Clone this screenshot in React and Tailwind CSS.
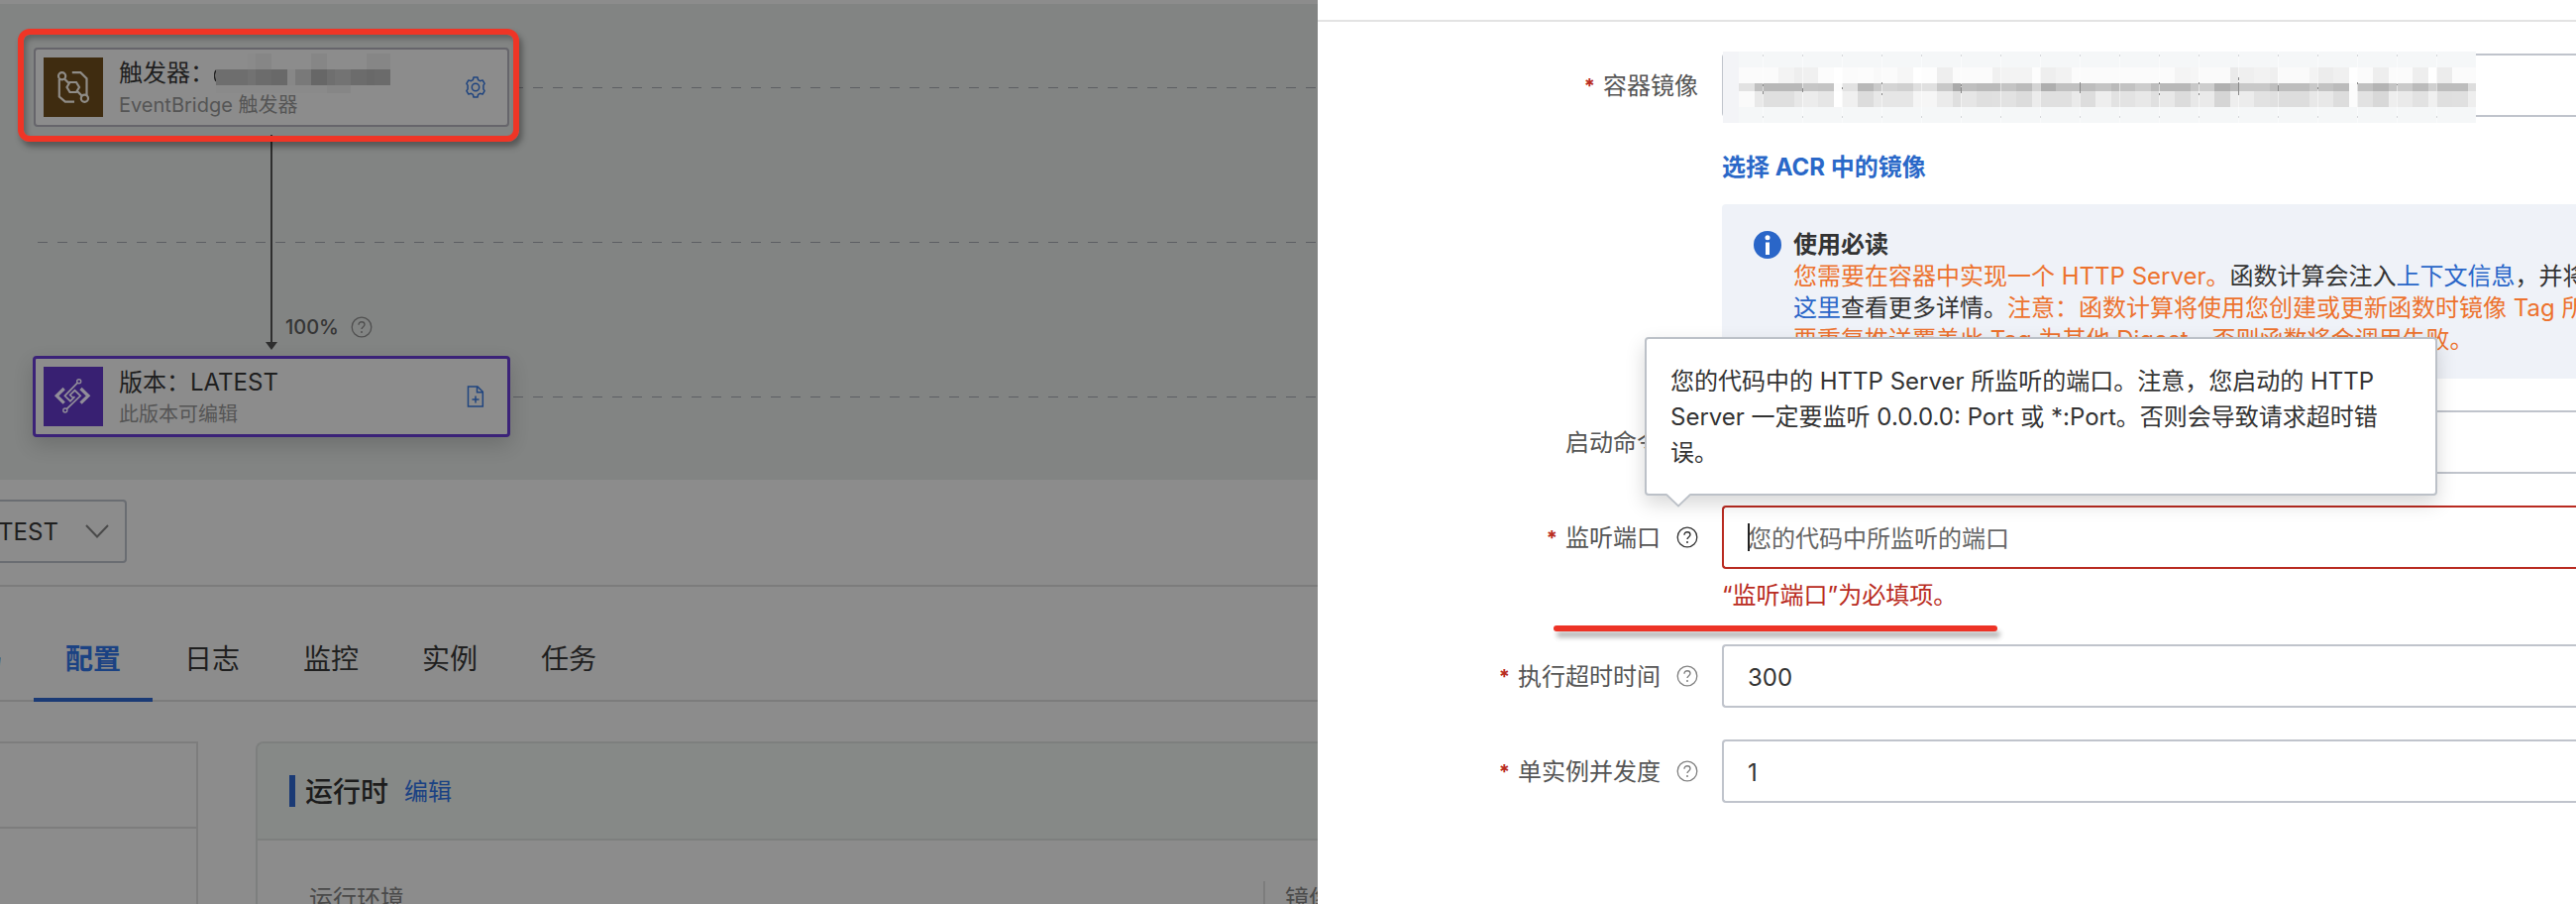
import React from "react";

const imageMosaic = {
  top: "f3fbfb fbf3ee f0fcff fbfcf9 fbf6ff fdeefb fbfbf0 f3f3fd eef2fb fbfbfb fbfbfb fbf4f6 fafaea eff2ef fafaf3 ecf0ff fbeefb fbeeff ecfbfb",
  mid: "f3e2c0 b8b8b8 c6c4fc e2b8ca d4d0df e0c8aa bfbaba c4bbd4 aec0c0 bdc4ba c2ccbc b8b8c8 cdb0bb c8c8be bdbdc8 c2bbfc c0b4c4 cabbd0 bdbddd",
  low: "f3fae9 dfdfe8 ece6ff f0dce8 e6e6f5 f6ebdf e6dfe0 e2dcec e0e0ea ddeee2 e3e8e0 e8dce8 ead5ee ece2e0 dddde8 e8ddfc e2d8ee eae2f0 dfe0ee",
};
const bands = [
  { key: "top", y: 16, h: 16 },
  { key: "mid", y: 32, h: 8 },
  { key: "low", y: 40, h: 16 },
];
const cells = [
  { dx: 0, w: 16 },
  { dx: 16, w: 16 },
  { dx: 32, w: 8 },
];

function ImageMosaic() {
  return (
    <svg className="absolute -top-0.5 left-px h-[72px] w-[760px]" viewBox="0 0 760 72" shapeRendering="crispEdges" aria-hidden="true">
      <rect width="760" height="72" fill="#f5f7f8" />
      {bands.map((band) =>
        imageMosaic[band.key].split(" ").map((tile, t) =>
          cells.map((cell, c) => {
            const g = tile.slice(c * 2, c * 2 + 2);
            return <rect key={band.key + t + "-" + c} x={t * 40 + cell.dx} y={band.y} width={cell.w} height={band.h} fill={"#" + g + g + g} />;
          })
        )
      )}
      <rect width="16" height="72" fill="#f3f4f7" />
      {Array.from({ length: 18 }, (_, i) => (
        <g key={i}>
          <rect x={(i + 1) * 40} y="0" width="1" height="72" fill="#ffffff" opacity="0.5" />
          <rect x={(i + 1) * 40} y="3" width="1" height="2" fill="#d5d7da" />
          <rect x={(i + 1) * 40} y="65" width="1" height="2" fill="#d5d7da" />
        </g>
      ))}
      <path d="M40 33v2M40 40v3M80 37v4M120 36v2M160 31v2M160 42v2M240 33v2M240 36v6M360 31v11M440 31v2M440 42v2M480 31v2M480 42v2M520 26v3M520 31v13M560 34v6M600 36v2M640 31v2M680 33v1" stroke="#8a8a8a" strokeWidth="1" />
    </svg>
  );
}

function NameMosaic() {
  return (
    <svg className="h-10 w-[178px]" viewBox="0 0 178 40" shapeRendering="crispEdges" aria-hidden="true">
      <path d="M2 17q-3 5 0 11" stroke="#222" strokeWidth="1.5" fill="none" shapeRendering="auto" />
      <g fill="#8a8a8a">
        <rect x="34" y="0" width="8" height="16" />
        <rect x="2" y="32" width="128" height="8" />
      </g>
      <g fill="#868686">
        <rect x="42" y="0" width="16" height="16" />
        <rect x="98" y="0" width="16" height="16" />
        <rect x="154" y="0" width="24" height="16" />
        <rect x="114" y="32" width="24" height="8" />
      </g>
      <rect x="2" y="16" width="32" height="16" fill="#6e6e6e" />
      <rect x="34" y="16" width="8" height="16" fill="#727272" />
      <rect x="42" y="16" width="16" height="16" fill="#6c6c6c" />
      <rect x="58" y="16" width="16" height="16" fill="#696969" />
      <rect x="74" y="16" width="8" height="16" fill="#878787" />
      <rect x="82" y="16" width="16" height="16" fill="#797979" />
      <rect x="98" y="16" width="16" height="16" fill="#676767" />
      <rect x="114" y="16" width="8" height="16" fill="#6f6f6f" />
      <rect x="122" y="16" width="16" height="16" fill="#737373" />
      <rect x="138" y="16" width="16" height="16" fill="#6c6c6c" />
      <rect x="154" y="16" width="8" height="16" fill="#696969" />
      <rect x="162" y="16" width="16" height="16" fill="#6b6b6b" />
    </svg>
  );
}

function HelpIcon({ className }) {
  return (
    <svg className={"h-[22px] w-[22px] shrink-0 " + className} viewBox="0 0 22 22" fill="none" stroke="currentColor" aria-hidden="true">
      <circle cx="11" cy="11" r="9.8" strokeWidth="1.3" />
      <path d="M8 8.7C8 6.9 9.3 5.8 11 5.8s3 1.1 3 2.7c0 2.1-3 2.3-3 4.6" strokeWidth="1.4" />
      <circle cx="11" cy="15.9" r="1" fill="currentColor" stroke="none" />
    </svg>
  );
}

function GearIcon() {
  return (
    <svg className="h-[22px] w-[22px]" viewBox="0 0 22 22" fill="none" stroke="#1f447f" strokeWidth="1.5" strokeLinejoin="round" aria-hidden="true">
      <path d="M9 1h4l.6 2.6 1.9 1.1 2.6-.8 2 3.5-1.2 1.7v3.8l1.2 1.7-2 3.5-2.6-.8-1.9 1.1L13 21H9l-.6-2.6-1.9-1.1-2.6.8-2-3.5 1.2-1.7V9.1L1.900 7.400l2-3.500 2.600.8 1.900-1.100z" />
      <circle cx="11" cy="11" r="3.700" />
    </svg>
  );
}

function FileAddIcon() {
  return (
    <svg className="h-[22px] w-[22px]" viewBox="0 0 22 22" fill="none" stroke="#1f447f" strokeWidth="1.5" aria-hidden="true">
      <path d="M3.500 1H13l5.300 5.300V21H3.500zM12.500 1v5.800h5.800M11 10.500v7M7.500 14h7" />
    </svg>
  );
}

function TriggerLogo() {
  return (
    <svg className="h-[60px] w-[60px] shrink-0 bg-[#3f2c10]" viewBox="0 0 60 60" fill="none" stroke="#8f8c87" strokeWidth="2.200" aria-hidden="true">
      <circle cx="18.600" cy="18.700" r="3.600" />
      <circle cx="41.400" cy="41.300" r="3.600" />
      <path d="M26.500 25h6.500l3 5-3 5h-6.500l-3-5zM21 21.500l4.500 4.500M34 34l4.600 4.600" />
      <path d="M15.800 22v17.500l6 5.200h9.200M28.800 15.200h8.500l6.200 6V38" />
    </svg>
  );
}

function FunctionLogo() {
  return (
    <svg className="h-[60px] w-[60px] shrink-0 bg-[#382072]" viewBox="0 0 60 60" fill="none" stroke="#918d99" aria-hidden="true">
      <path d="M20.700 22l-7.500 7.300 7.500 7.400M37.500 22l7.500 7.300-7.500 7.400" strokeWidth="3.200" />
      <circle cx="35.700" cy="14.700" r="2" strokeWidth="1.400" />
      <circle cx="21.800" cy="44" r="2" strokeWidth="1.400" />
      <path d="M34.300 16.200L21.400 29.300l5.600 5.400 4.500-4.600M23.300 42.600l13.900-13.300-5.700-5.500-4.800 4.700 2.800 2.700" strokeWidth="1.700" />
    </svg>
  );
}

function Tab({ children, active }) {
  return (
    <button
      type="button"
      className={
        "-mb-0.5 w-[120px] shrink-0 border-b-4 pt-[57px] pb-[23px] text-[28px] leading-8 " +
        (active ? "border-[#1a3a75] font-bold text-[#1b4283]" : "border-transparent text-[#1f1f1f]")
      }
    >
      {children}
    </button>
  );
}

function FieldLabel({ htmlFor, required, help, helpDark, children }) {
  return (
    <div className="flex h-16 w-96 shrink-0 items-center justify-end">
      <label htmlFor={htmlFor} className="flex items-center gap-2 pt-0.5 text-2xl leading-9 text-[#555555]">
        {required && <span className="text-xl leading-9 font-bold text-[#b92b21]">*</span>}
        {children}
      </label>
      {help && <HelpIcon className={"ml-4 " + (helpDark ? "text-[#333333]" : "text-[#808080]")} />}
    </div>
  );
}

const inputClass = "block h-16 w-full rounded-l-sm border-2 border-r-0 bg-white pt-0.5 pl-6 text-2xl text-[#333333] outline-none placeholder:text-[#666666] ";

function Workspace() {
  return (
    <main className="min-w-0 flex-1 overflow-hidden bg-[#8c8c8c] pt-1">
      <section className="relative h-[480px] bg-[#828483]">
        <svg className="absolute inset-0 h-full w-full" aria-hidden="true">
          <g stroke="#5c5e63" strokeWidth="1" strokeDasharray="10 10">
            <line x1="518" x2="100%" y1="84.5" y2="84.5" />
            <line x1="38" x2="100%" y1="240.5" y2="240.5" />
            <line x1="518" x2="100%" y1="396.5" y2="396.5" />
          </g>
          <line x1="274" x2="274" y1="132" y2="343" stroke="#2e2e2e" strokeWidth="2" />
          <path d="M268 341h12l-6 8z" fill="#2e2e2e" />
        </svg>
        <div className="absolute top-11 left-[34px] flex h-20 w-[480px] items-center rounded border-2 border-[#66656b] bg-[#8c8c8c] pr-[21px] pl-2">
          <TriggerLogo />
          <div className="ml-4 flex-1">
            <div className="flex h-9 items-center text-2xl leading-9 text-[#1f1f1f]">
              触发器：
              <NameMosaic />
            </div>
            <div className="text-xl leading-7 text-[#555555]">EventBridge 触发器</div>
          </div>
          <button type="button" aria-label="设置">
            <GearIcon />
          </button>
        </div>
        <div className="absolute top-[25px] left-[18px] h-[114px] w-[506px] rounded-xl border-6 border-[#ef3526] shadow-[3px_5px_6px_rgba(0,0,0,0.35),inset_3px_4px_5px_rgba(0,0,0,0.25)]" />
        <div className="absolute top-[312px] left-72 flex items-center gap-3 text-xl leading-7 font-medium text-[#353535]">
          100%
          <HelpIcon className="text-[#505050]" />
        </div>
        <div className="absolute top-[355px] left-[33px] flex h-[82px] w-[482px] items-center rounded border-3 border-[#3b2278] bg-[#8c8c8c] pr-[21px] pl-2 shadow-[0_8px_20px_rgba(0,0,0,0.16)]">
          <FunctionLogo />
          <div className="ml-4 flex-1">
            <div className="text-2xl leading-9 text-[#1f1f1f]">版本：LATEST</div>
            <div className="text-xl leading-7 text-[#555555]">此版本可编辑</div>
          </div>
          <button type="button" aria-label="发布版本">
            <FileAddIcon />
          </button>
        </div>
      </section>

      <div className="border-b-2 border-[#7c7c7c] pt-5 pb-[22px]">
        <div className="relative -ml-14 w-[184px]">
          <select aria-label="版本" className="block h-16 w-full appearance-none rounded border-2 border-[#6a6d72] bg-transparent pt-0.5 pl-6 text-2xl text-[#1f1f1f]">
            <option>LATEST</option>
          </select>
          <svg className="pointer-events-none absolute top-[25px] right-[18px] h-[14px] w-6" viewBox="0 0 24 14" fill="none" stroke="#4a4a4a" strokeWidth="2" aria-hidden="true">
            <path d="M1 1l11 11.500L23 1" />
          </svg>
        </div>
      </div>

      <nav className="-ml-[86px] flex border-b-2 border-[#7c7c7c]">
        <Tab>代码</Tab>
        <Tab active>配置</Tab>
        <Tab>日志</Tab>
        <Tab>监控</Tab>
        <Tab>实例</Tab>
        <Tab>任务</Tab>
      </nav>

      <div className="mt-10 flex h-96 gap-[58px]">
        <aside className="w-[200px] shrink-0 border-t-2 border-r-2 border-[#7d7d7d]">
          <div className="h-[86px] border-b-2 border-[#7d7d7d]" />
        </aside>
        <section className="min-w-0 flex-1 rounded-tl-lg border-t-2 border-l-2 border-[#7d7f7e]">
          <header className="flex h-[98px] items-center rounded-tl-md border-b-2 border-[#7d7f7e] bg-[#868987] pl-8">
            <span className="h-8 w-1.5 bg-[#1a3a75]" />
            <h2 className="ml-2.5 pt-0.5 text-[28px] leading-9 font-medium text-[#1c1c1c]">运行时</h2>
            <a href="#edit" className="ml-4 pt-0.5 text-2xl leading-9 text-[#1b4283]">
              编辑
            </a>
          </header>
          <div className="flex pt-[41px] pl-[52px] text-2xl leading-9 text-[#4a4a4a]">
            <div className="flex-1">运行环境</div>
            <div className="w-[55px] shrink-0 overflow-hidden border-l-2 border-[#7d7d7d] pl-5 whitespace-nowrap">镜像</div>
          </div>
        </section>
      </div>
    </main>
  );
}

function Drawer() {
  return (
    <aside className="w-[1270px] shrink-0 overflow-hidden bg-white">
      <div className="h-[22px] border-b-2 border-[#e3e3e3]" />
      <form className="flex flex-col gap-8 pt-8">
        <div className="flex gap-6">
          <FieldLabel htmlFor="image" required>
            容器镜像
          </FieldLabel>
          <div className="min-w-0 flex-1">
            <div className="relative">
              <input id="image" className={inputClass + "border-[#c0c4cc]"} />
              <ImageMosaic />
            </div>
            <a href="#acr" className="mt-[33px] inline-block text-2xl leading-9 font-bold text-[#2a68c8]">
              选择 ACR 中的镜像
            </a>
            <div className="mt-[19px] flex gap-3 overflow-hidden rounded-l-sm bg-[#eff2f8] pt-[25px] pb-[23px] pl-8 text-2xl leading-8 whitespace-nowrap text-[#333333]">
              <svg className="mt-0.5 h-7 w-7 shrink-0" viewBox="0 0 28 28" aria-hidden="true">
                <circle cx="14" cy="14" r="14" fill="#2a66c8" />
                <circle cx="14" cy="6.700" r="2.500" fill="#fff" />
                <rect x="12" y="11.500" width="4" height="12.500" fill="#fff" />
              </svg>
              <div>
                <div className="font-bold">使用必读</div>
                <div>
                  <span className="text-[#ed722e]">您需要在容器中实现一个 HTTP Server。</span>
                  函数计算会注入
                  <a href="#context" className="text-[#2a66c8]">
                    上下文信息
                  </a>
                  ，并将
                </div>
                <div>
                  <a href="#more" className="text-[#2a66c8]">
                    这里
                  </a>
                  查看更多详情。
                  <span className="text-[#ed722e]">注意：函数计算将使用您创建或更新函数时镜像 Tag 所</span>
                </div>
                <div className="text-[#ed722e]">要重复推送覆盖此 Tag 为其他 Digest，否则函数将会调用失败。</div>
              </div>
            </div>
          </div>
        </div>

        <div className="flex gap-6">
          <FieldLabel htmlFor="command" help>
            启动命令
          </FieldLabel>
          <div className="min-w-0 flex-1">
            <input id="command" className={inputClass + "border-[#c0c4cc]"} />
          </div>
        </div>

        <div className="relative flex gap-6">
          <FieldLabel htmlFor="port" required help helpDark>
            监听端口
          </FieldLabel>
          <div className="min-w-0 flex-1">
            <div className="relative">
              <input id="port" placeholder="您的代码中所监听的端口" className={inputClass + "border-[#b92b21]"} />
              <span className="absolute top-[18px] left-[26px] h-7 w-0.5 bg-[#222222]" />
            </div>
            <p className="mt-[9px] -mb-px text-2xl leading-9 text-[#b92b21]">“监听端口”为必填项。</p>
          </div>
          <div className="absolute top-[121px] left-[238px] h-1.5 w-[448px] rounded-full bg-[#ed3326] shadow-[3px_6px_5px_rgba(0,0,0,0.3)]" />
          <div
            role="tooltip"
            className="absolute bottom-[118px] left-[330px] h-40 w-[800px] rounded border-2 border-[#bcc1c8] bg-white px-6 pt-[25px] text-2xl leading-9 text-[#333333] shadow-[0_8px_20px_rgba(0,0,0,0.16)]"
          >
            您的代码中的 HTTP Server 所监听的端口。注意，您启动的 HTTP Server 一定要监听 0.0.0.0: Port 或 *:Port。否则会导致请求超时错误。
            <svg className="absolute top-full left-5 h-[14px] w-6" viewBox="0 0 24 14" aria-hidden="true">
              <path d="M0 0h24L12 12.500z" fill="#fff" />
              <path d="M0 1l12 11.500L24 1" fill="none" stroke="#bcc1c8" strokeWidth="1.800" />
            </svg>
          </div>
        </div>

        <div className="flex gap-6">
          <FieldLabel htmlFor="timeout" required help>
            执行超时时间
          </FieldLabel>
          <div className="min-w-0 flex-1">
            <input id="timeout" defaultValue="300" className={inputClass + "border-[#c0c4cc]"} />
          </div>
        </div>

        <div className="flex gap-6">
          <FieldLabel htmlFor="concurrency" required help>
            单实例并发度
          </FieldLabel>
          <div className="min-w-0 flex-1">
            <input id="concurrency" defaultValue="1" className={inputClass + "border-[#c0c4cc]"} />
          </div>
        </div>
      </form>
    </aside>
  );
}

export default function App() {
  return (
    <div className="flex h-screen overflow-hidden bg-white font-[Inter,'Noto_Sans_CJK_SC',sans-serif]">
      <Workspace />
      <Drawer />
    </div>
  );
}
